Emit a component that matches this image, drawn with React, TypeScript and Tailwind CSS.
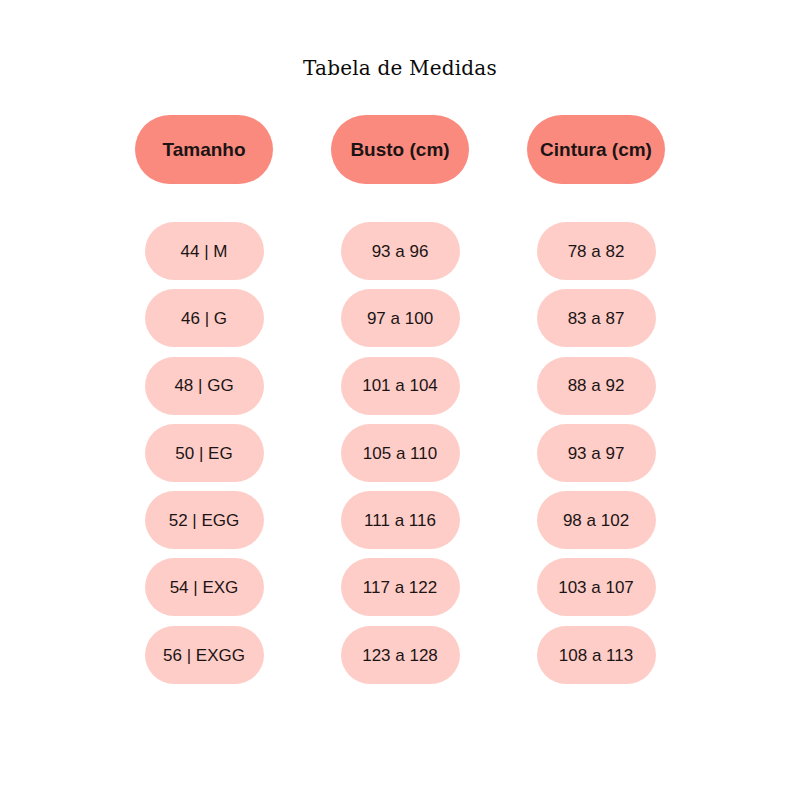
import React from "react";

const headers = ["Tamanho", "Busto (cm)", "Cintura (cm)"];

const rows = [
  ["44 | M", "93 a 96", "78 a 82"],
  ["46 | G", "97 a 100", "83 a 87"],
  ["48 | GG", "101 a 104", "88 a 92"],
  ["50 | EG", "105 a 110", "93 a 97"],
  ["52 | EGG", "111 a 116", "98 a 102"],
  ["54 | EXG", "117 a 122", "103 a 107"],
  ["56 | EXGG", "123 a 128", "108 a 113"],
];

const App = () => {
  return (
    <div className="w-[800px] h-[800px] bg-white font-['Liberation_Sans',Arial,sans-serif] text-[#1c1414]">
      <div className="pt-[54px] text-center">
        <h1 className="font-['DejaVu_Serif',serif] text-[20px] leading-[28px] tracking-[0.2px] text-[#0a0a0a]">
          Tabela de Medidas
        </h1>
      </div>

      <div className="mx-auto mt-[33px] w-[588px] grid grid-cols-3">
        {headers.map((h) => (
          <div key={h} className="flex justify-center">
            <div className="w-[138px] h-[69px] rounded-full bg-[#fa8a7e] flex items-center justify-center pt-[2px] font-bold text-[19px]">
              {h}
            </div>
          </div>
        ))}
      </div>

      <div className="mx-auto mt-[38px] w-[588px] grid grid-cols-3 gap-y-[9.3px]">
        {rows.map((row, i) =>
          row.map((cell, j) => (
            <div key={`${i}-${j}`} className="flex justify-center">
              <div className="w-[119px] h-[58px] rounded-full bg-[#fecdc8] flex items-center justify-center pt-[1px] text-[17px]">
                {cell}
              </div>
            </div>
          ))
        )}
      </div>
    </div>
  );
};

export default App;
